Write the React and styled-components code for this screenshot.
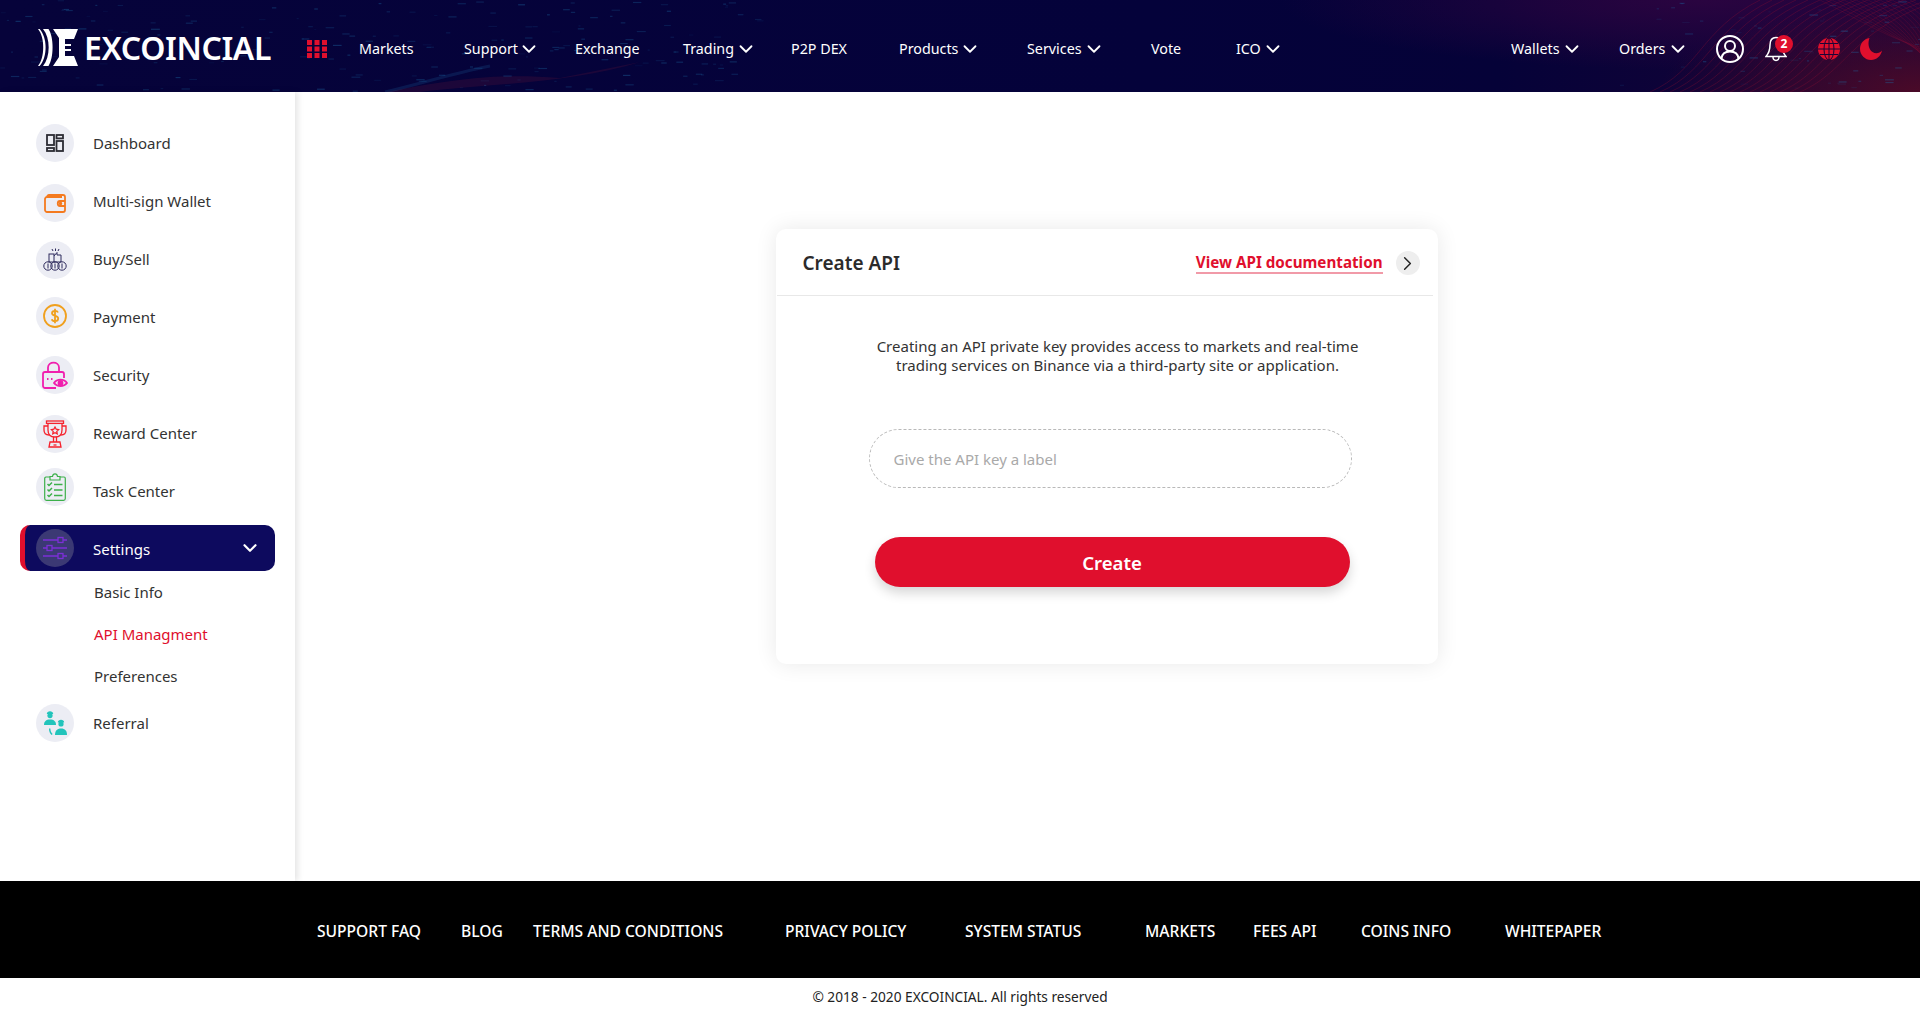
import React from 'react';
import styled, { createGlobalStyle } from 'styled-components';
import { ChevronDown, ChevronRight } from 'lucide-react';

var GlobalStyle = createGlobalStyle`
  html, body { margin: 0; padding: 0; background: #fff; }
  body { font-family: "Noto Sans", "Open Sans", sans-serif; color: #333; }
  * { box-sizing: border-box; }
`;

var navLeft = [
  { label: 'Markets', width: 105 },
  { label: 'Support', width: 111, caret: true, gap: 0 },
  { label: 'Exchange', width: 108 },
  { label: 'Trading', width: 108, caret: true, gap: 1 },
  { label: 'P2P DEX', width: 108 },
  { label: 'Products', width: 128, caret: true, gap: 1 },
  { label: 'Services', width: 124, caret: true, gap: 1 },
  { label: 'Vote', width: 85 },
  { label: 'ICO', width: 60, caret: true, gap: 1 },
];

var footerLinks = [
  { label: 'SUPPORT FAQ', width: 144 },
  { label: 'BLOG', width: 72 },
  { label: 'TERMS AND CONDITIONS', width: 252 },
  { label: 'PRIVACY POLICY', width: 180 },
  { label: 'SYSTEM STATUS', width: 180 },
  { label: 'MARKETS', width: 108 },
  { label: 'FEES API', width: 108 },
  { label: 'COINS INFO', width: 144 },
  { label: 'WHITEPAPER', width: 100 },
];

// header picture is a photo of dots, this gets near it
var dots = (() => {
  var out = [];
  var seed = 7;
  var rnd = () => {
    seed = (seed * 16807) % 2147483647;
    return seed / 2147483647;
  };
  for (var i = 0; i < 260; i++) {
    var x = rnd();
    var y = rnd();
    var right = i % 4 === 0;
    out.push({
      x: right ? 1620 + x * 300 : x * 760,
      y: y * 92,
      w: 2 + rnd() * 7,
      o: 0.08 + rnd() * 0.3,
    });
  }
  return out;
})();

var waves = Array.from({ length: 16 }, (_, i) => i);

var HeaderArt = () => (
  <ArtSvg viewBox="0 0 1920 92" preserveAspectRatio="none" aria-hidden="true">
    {dots.map((d, i) => (
      <rect key={i} x={d.x} y={d.y} width={d.w} height="1.2" fill="#1d6fa8" opacity={d.o} />
    ))}
    {waves.map((i) => (
      <path
        key={i}
        d={`M${1650 + i * 10} 92 C${1700 + i * 10} 70 ${1700 + i * 10} 30 ${1760 + i * 12} 0`}
        fill="none"
        stroke="#a01030"
        strokeWidth="0.8"
        opacity="0.35"
      />
    ))}
    {waves.map((i) => (
      <path
        key={'b' + i}
        d={`M${1820 + i * 6} 0 C${1860 + i * 6} 20 ${1890 + i * 4} 40 1930 ${50 + i * 3}`}
        fill="none"
        stroke="#a01030"
        strokeWidth="0.8"
        opacity="0.25"
      />
    ))}
    <path d="M385 92 C440 82 490 72 560 78 L640 62 C570 84 480 84 420 92 Z" fill="#7a1838" opacity="0.2" />
    <path d="M385 92 C420 84 450 74 490 66" stroke="#1d6fa8" strokeWidth="3" fill="none" opacity="0.2" />
  </ArtSvg>
);

var Logo = () => (
  <svg width="40" height="37" viewBox="0 0 40 37" aria-hidden="true">
    <path d="M0 0 C7 8 7 29 0 37 L1.6 37 C9.6 28 9.6 9 1.6 0 Z" fill="#fff" />
    <path d="M5 0 L10.5 0 C16 8 16 29 10.5 37 L5 37 C12.6 28 12.6 9 5 0 Z" fill="#fff" />
    <path
      d="M15 0 H40 L36 10 H27 V15 H33 V17 H27 V20 H33 V22 H27 V27 H36 L40 37 H15 L21 28 C21 24 21 13 21 9 Z"
      fill="#fff"
    />
  </svg>
);

var GridIcon = () => (
  <svg width="20" height="18" viewBox="0 0 20 18" aria-hidden="true">
    {[0, 7.5, 15].map((x) =>
      [0, 6.5, 13].map((y) => <rect key={`${x}-${y}`} x={x} y={y} width="5" height="5" fill="#e00f2d" />)
    )}
  </svg>
);

var UserIcon = () => (
  <svg width="28" height="28" viewBox="0 0 28 28" fill="none" stroke="#fff" strokeWidth="2" aria-hidden="true">
    <circle cx="14" cy="14" r="13" />
    <circle cx="14" cy="11" r="5" />
    <path d="M5.5 23.5 C6 18.5 10 16.5 14 16.5 C18 16.5 22 18.5 22.5 23.5" />
  </svg>
);

var BellIcon = () => (
  <svg width="22" height="26" viewBox="0 0 22 26" fill="none" stroke="#fff" strokeWidth="1.5" aria-hidden="true">
    <path d="M11 1.5 C6.5 1.5 5 5 5 9 C5 14 4 17 1 20.5 H21 C18 17 17 14 17 9 C17 5 15.5 1.5 11 1.5 Z" />
    <path d="M8 21 C8 25.5 14 25.5 14 21" />
  </svg>
);

var GlobeIcon = () => (
  <svg width="22" height="22" viewBox="0 0 22 22" aria-hidden="true">
    <circle cx="11" cy="11" r="11" fill="#e00f2d" />
    <g fill="none" stroke="#1a0536" strokeWidth="1">
      <ellipse cx="11" cy="11" rx="5" ry="11" />
      <path d="M11 0 V22 M0 11 H22 M2 5.5 H20 M2 16.5 H20" />
    </g>
  </svg>
);

var MoonIcon = () => (
  <svg width="22" height="22" viewBox="0 0 22 22" aria-hidden="true">
    <path d="M9.5 0 C4 1 0 5.5 0 11 C0 17 5 22 11 22 C16.5 22 21 18 22 12.5 C19.5 15.5 15.5 16 12.5 14 C8.5 11.5 7.5 5 9.5 0 Z" fill="#e00f2d" />
  </svg>
);

var DashboardIcon = () => (
  <svg width="18" height="18" viewBox="0 0 18 18" fill="none" stroke="#2b2b33" strokeWidth="1.8" aria-hidden="true">
    <rect x="1" y="1" width="7" height="10" />
    <rect x="1" y="14" width="7" height="3" />
    <rect x="10.5" y="1" width="6.5" height="3.4" />
    <rect x="10.5" y="7" width="6.5" height="10" />
  </svg>
);

var WalletIcon = () => (
  <svg width="22" height="19" viewBox="0 0 22 19" fill="none" stroke="#f47a1f" strokeWidth="1.8" aria-hidden="true">
    <path d="M3 3 C3 1.8 4 1 5 1 H19 C20 1 21 2 21 3 V16 C21 17 20 18 19 18 H3 C2 18 1 17 1 16 V5 C1 4 2 3 3 3 H18" />
    <path d="M21 7 H16 C13 7 13 12 16 12 H21" />
    <circle cx="16.5" cy="9.5" r="0.9" />
  </svg>
);

var BuySellIcon = () => (
  <svg width="24" height="24" viewBox="0 0 24 24" fill="none" stroke="#2d2a5c" strokeWidth="1" aria-hidden="true">
    <path d="M9 1 L10 3 M12.5 0.5 V3 M16 1 L15 3" />
    <rect x="6" y="6" width="5" height="8" />
    <path d="M11 8 L14 4.5 V7 H18 V14 H11" />
    <circle cx="5" cy="18" r="4.2" />
    <circle cx="12" cy="18" r="4.2" />
    <circle cx="19" cy="18" r="4.2" />
    <path d="M5 15.5 V20.5 M12 15.5 V20.5 M19 15.5 V20.5" />
  </svg>
);

var PaymentIcon = () => (
  <svg width="24" height="24" viewBox="0 0 24 24" fill="none" stroke="#f0a01e" strokeWidth="1.8" aria-hidden="true">
    <circle cx="12" cy="12" r="11" />
    <path d="M15 8.5 C14.5 7 13 6.8 12 6.8 C10.2 6.8 9 7.8 9 9.2 C9 12.4 15.2 11 15.2 14.6 C15.2 16.2 13.8 17.2 12 17.2 C10.6 17.2 9.2 16.6 8.8 15.2 M12 4.8 V19.2" />
  </svg>
);

var SecurityIcon = () => (
  <svg width="26" height="28" viewBox="0 0 26 28" fill="none" stroke="#f01fae" strokeWidth="1.8" aria-hidden="true">
    <path d="M6 11 V6.5 C6 0 17 0 17 6.5 V11" />
    <path d="M14 27 H3 C2 27 1 26 1 25 V13 C1 12 2 11 3 11 H20 C21 11 22 12 22 13 V17" />
    <path d="M5 18 H6.5 M9 18 H10.5" />
    <path d="M12 22 C15 17.5 22 17.5 25 22 C22 26 15 26 12 22 Z" />
    <circle cx="18.5" cy="22" r="2" fill="#f01fae" />
  </svg>
);

var RewardIcon = () => (
  <svg width="24" height="28" viewBox="0 0 24 28" fill="none" stroke="#f5222d" strokeWidth="1.3" aria-hidden="true">
    <rect x="3.5" y="1" width="17" height="2.4" />
    <path d="M5 3.5 V10 C5 15 8 17 12 17 C16 17 19 15 19 10 V3.5" />
    <path d="M5 6 H1 V10 C1 13 3 15 6 15 M19 6 H23 V10 C23 13 21 15 18 15" />
    <path d="M12 7 L13.2 9.2 L15.6 9.6 L13.8 11.4 L14.2 13.8 L12 12.7 L9.8 13.8 L10.2 11.4 L8.4 9.6 L10.8 9.2 Z" />
    <path d="M10.5 17 V22 H13.5 V17 M7 22 H17 L18 27 H6 Z" />
    <path d="M10.5 25 H13.5" />
  </svg>
);

var TaskIcon = () => (
  <svg width="22" height="28" viewBox="0 0 22 28" fill="none" stroke="#3cb04a" strokeWidth="1.2" aria-hidden="true">
    <path d="M6 4 H2 C1 4 0.7 5 0.7 5.5 V25.5 C0.7 26.5 1.5 27.3 2.5 27.3 H19.5 C20.5 27.3 21.3 26.5 21.3 25.5 V5.5 C21.3 4.5 20.5 4 20 4 H16" />
    <path d="M6 7 V3.5 H8.5 C9 0 13 0 13.5 3.5 H16 V7 Z" />
    <path d="M3.5 11 L5 12.5 L8 9.5 M3.5 16.5 L5 18 L8 15 M3.5 22 L5 23.5 L8 20.5" strokeWidth="1.5" />
    <path d="M10 11.5 H18.5 M10 17 H18.5 M10 22.5 H18.5" strokeWidth="1.5" />
  </svg>
);

var SlidersIcon = () => (
  <svg width="24" height="24" viewBox="0 0 24 24" fill="none" stroke="#7c2fd6" strokeWidth="1.3" aria-hidden="true">
    <path d="M0 4 H15 M20 4 H24 M0 12 H4 M9 12 H24 M0 20 H15 M20 20 H24" />
    <rect x="15" y="1.5" width="5" height="5" />
    <rect x="4" y="9.5" width="5" height="5" />
    <rect x="15" y="17.5" width="5" height="5" />
  </svg>
);

var ReferralIcon = () => (
  <svg width="25" height="25" viewBox="0 0 25 25" fill="#22c4bb" aria-hidden="true">
    <path d="M3.8 3 C3.8 -0.6 10.2 -0.6 10.2 3 Z" />
    <circle cx="7" cy="4.6" r="2.6" />
    <path d="M1 14 C1 10.5 3 8.6 7 8.6 C11 8.6 13 10.5 13 14 Z" />
    <path d="M14.8 11.4 C14.8 7.8 21.2 7.8 21.2 11.4 Z" />
    <circle cx="18" cy="13" r="2.6" />
    <path d="M12 24 C12 20 14 17.6 18 17.6 C22 17.6 24 20 24 24 Z" />
    <path d="M6 17.5 L7.4 17.5 C7.4 19.6 8 21.4 9.6 23 L8.7 24 C6.8 22.4 6 20.4 6 17.5 Z" />
  </svg>
);

var menu = [
  { label: 'Dashboard', icon: <DashboardIcon /> },
  { label: 'Multi-sign Wallet', icon: <WalletIcon />, shift: 2 },
  { label: 'Buy/Sell', icon: <BuySellIcon />, shift: 1 },
  { label: 'Payment', icon: <PaymentIcon />, shift: -1 },
  { label: 'Security', icon: <SecurityIcon /> },
  { label: 'Reward Center', icon: <RewardIcon />, shift: 1 },
  { label: 'Task Center', icon: <TaskIcon />, shift: -4 },
];

var App = () => {
  return (
    <Page>
      <GlobalStyle />
      <Header>
        <HeaderArt />
        <Brand>
          <Logo />
          <BrandName>EXCOINCIAL</BrandName>
        </Brand>
        <GridSlot>
          <GridIcon />
        </GridSlot>
        <NavGroup>
          {navLeft.map((item) => (
            <NavItem key={item.label} $width={item.width} $gap={item.gap}>
              {item.label}
              {item.caret && <ChevronDown size={22} strokeWidth={2} />}
            </NavItem>
          ))}
        </NavGroup>
        <NavRight>
          <NavItem $width={108} $gap={2}>
            Wallets
            <ChevronDown size={22} strokeWidth={2} />
          </NavItem>
          <NavItem $width={97} $gap={2}>
            Orders
            <ChevronDown size={22} strokeWidth={2} />
          </NavItem>
          <IconSlot $width={49}>
            <UserIcon />
          </IconSlot>
          <IconSlot $width={53}>
            <BellIcon />
            <Badge>2</Badge>
          </IconSlot>
          <IconSlot $width={42}>
            <GlobeIcon />
          </IconSlot>
          <IconSlot $width={22}>
            <MoonIcon />
          </IconSlot>
        </NavRight>
      </Header>

      <Body>
        <Sidebar>
          {menu.map((item) => (
            <MenuRow key={item.label}>
              <IconCircle $shift={item.shift}>{item.icon}</IconCircle>
              <MenuLabel>{item.label}</MenuLabel>
            </MenuRow>
          ))}
          <ActiveRow>
            <IconCircle $active>
              <SlidersIcon />
            </IconCircle>
            <MenuLabel $active>Settings</MenuLabel>
            <ChevronDown size={22} strokeWidth={2.4} color="#fff" />
          </ActiveRow>
          <SubMenu>
            <SubItem>Basic Info</SubItem>
            <SubItem $active>API Managment</SubItem>
            <SubItem>Preferences</SubItem>
          </SubMenu>
          <MenuRow>
            <IconCircle>
              <ReferralIcon />
            </IconCircle>
            <MenuLabel>Referral</MenuLabel>
          </MenuRow>
        </Sidebar>

        <Main>
          <Card>
            <CardHead>
              <CardTitle>Create API</CardTitle>
              <DocLink>View API documentation</DocLink>
              <RoundArrow>
                <ChevronRight size={23} strokeWidth={1.5} color="#222" />
              </RoundArrow>
            </CardHead>
            <CardBody>
              <Intro>
                Creating an API private key provides access to markets and real-time
                <br />
                trading services on Binance via a third-party site or application.
              </Intro>
              <LabelInput placeholder="Give the API key a label" />
              <CreateButton>Create</CreateButton>
            </CardBody>
          </Card>
        </Main>
      </Body>

      <Footer>
        {footerLinks.map((link) => (
          <FooterLink key={link.label} $width={link.width}>
            {link.label}
          </FooterLink>
        ))}
      </Footer>
      <Copyright>© 2018 - 2020 EXCOINCIAL. All rights reserved</Copyright>
    </Page>
  );
};

var Page = styled.div`
  display: flex;
  flex-direction: column;
  min-height: 1021px;
  background: #fff;
`;

var Header = styled.header`
  position: relative;
  display: flex;
  align-items: center;
  height: 92px;
  padding: 5px 38px 0 38px;
  color: #fff;
  overflow: hidden;
  background:
    radial-gradient(ellipse 260px 90px at 100% 100%, #4a0a28 0%, rgba(74, 10, 40, 0) 100%),
    radial-gradient(ellipse 420px 70px at 1700px 0, #2a0440 0%, rgba(42, 4, 64, 0) 100%),
    linear-gradient(90deg, #06033a 0%, #04023a 60%, #050238 78%, #1a0338 100%);
`;

var ArtSvg = styled.svg`
  position: absolute;
  inset: 0;
  width: 100%;
  height: 100%;
`;

var Brand = styled.div`
  position: relative;
  display: flex;
  align-items: center;
  gap: 6px;
  width: 269px;
  margin-top: -2px;
`;

var BrandName = styled.span`
  font-size: 32px;
  font-weight: 600;
  letter-spacing: -0.4px;
  line-height: 37px;
  color: #fff;
`;

var GridSlot = styled.div`
  position: relative;
  display: flex;
  width: 52px;
`;

var NavGroup = styled.nav`
  position: relative;
  display: flex;
  align-items: center;
`;

var NavRight = styled(NavGroup)`
  margin-left: auto;
`;

var NavItem = styled.a`
  display: flex;
  align-items: center;
  gap: ${(p) => p.$gap || 0}px;
  width: ${(p) => p.$width}px;
  font-size: 14.3px;
  line-height: 20px;
  color: #fff;
  white-space: nowrap;
`;

var IconSlot = styled.span`
  position: relative;
  display: flex;
  align-items: center;
  width: ${(p) => p.$width}px;
`;

var Badge = styled.span`
  position: absolute;
  left: 10px;
  top: -1px;
  width: 18px;
  height: 18px;
  border-radius: 50%;
  background: #e00f2d;
  color: #fff;
  font-size: 12px;
  font-weight: 700;
  line-height: 18px;
  text-align: center;
`;

var Body = styled.div`
  display: flex;
  height: 789px;
`;

var Sidebar = styled.aside`
  position: relative;
  width: 295px;
  flex-shrink: 0;
  padding: 22px 20px 0;
  background: #fff;
  box-shadow: 3px 0 6px rgba(0, 0, 0, 0.1);
`;

var MenuRow = styled.div`
  display: flex;
  align-items: center;
  height: 58px;
  padding-left: 16px;
`;

var ActiveRow = styled(MenuRow)`
  height: 46px;
  margin-top: 5px;
  padding-right: 14px;
  border-left: 5px solid #e00f2d;
  padding-left: 11px;
  border-radius: 10px;
  background: #0d0a5e;
`;

var IconCircle = styled.span`
  display: flex;
  align-items: center;
  justify-content: center;
  flex-shrink: 0;
  width: 38px;
  height: 38px;
  border-radius: 50%;
  background: ${(p) => (p.$active ? '#3b3974' : '#ecedf4')};
  transform: translateY(${(p) => p.$shift || 0}px);
`;

var MenuLabel = styled.span`
  flex: 1;
  margin-left: 19px;
  padding-top: ${(p) => (p.$active ? 2 : 0)}px;
  font-size: 15px;
  color: ${(p) => (p.$active ? '#fff' : '#333')};
`;

var SubMenu = styled.div`
  display: flex;
  flex-direction: column;
  margin-bottom: -3px;
  padding-left: 74px;
`;

var SubItem = styled.a`
  height: 42px;
  font-size: 15px;
  line-height: 42px;
  color: ${(p) => (p.$active ? '#e00f2d' : '#333')};
`;

var Main = styled.main`
  flex: 1;
  display: flex;
  justify-content: center;
  padding: 137px 2px 0 0;
`;

var Card = styled.section`
  width: 662px;
  height: 435px;
  border-radius: 10px;
  background: #fff;
  box-shadow: 0 0 22px rgba(0, 0, 0, 0.09);
`;

var CardHead = styled.div`
  display: flex;
  align-items: center;
  height: 67px;
  margin: 0 5px 0 1px;
  padding: 2px 13px 0 26px;
  border-bottom: 1px solid #e8e8e8;
`;

var CardTitle = styled.h2`
  flex: 1;
  margin: 0;
  font-size: 19px;
  font-weight: 600;
  color: #2b2b2b;
`;

var DocLink = styled.a`
  font-size: 15.2px;
  font-weight: 700;
  line-height: 20px;
  color: #e00f2d;
  border-bottom: 2px solid #f19aa8;
`;

var RoundArrow = styled.span`
  display: flex;
  align-items: center;
  justify-content: center;
  width: 24px;
  height: 24px;
  margin-left: 13px;
  border-radius: 50%;
  background: #eee;
`;

var CardBody = styled.div`
  display: flex;
  flex-direction: column;
  align-items: flex-start;
  padding: 41px 0 0 93px;
`;

var Intro = styled.p`
  width: 498px;
  margin: 0;
  font-size: 15px;
  line-height: 19px;
  text-align: center;
  color: #333;
`;

var LabelInput = styled.input`
  width: 483px;
  height: 59px;
  margin-top: 54px;
  padding: 0 24px;
  border: 1px dashed #b9b9b9;
  border-radius: 30px;
  outline: none;
  background: #fff;
  font-family: inherit;
  font-size: 15px;
  color: #333;

  &::placeholder {
    color: #a9a9a9;
    opacity: 1;
  }
`;

var CreateButton = styled.button`
  width: 475px;
  height: 50px;
  margin: 49px 0 0 6px;
  border: 0;
  border-radius: 25px;
  background: #e00f2d;
  box-shadow: 0 6px 12px rgba(0, 0, 0, 0.16);
  color: #fff;
  font-family: inherit;
  font-size: 18.6px;
  font-weight: 600;
`;

var Footer = styled.footer`
  display: flex;
  align-items: center;
  height: 97px;
  padding: 2px 0 0 317px;
  background: #000;
`;

var FooterLink = styled.a`
  width: ${(p) => p.$width}px;
  font-size: 15.6px;
  font-weight: 500;
  color: #fff;
  white-space: nowrap;
`;

var Copyright = styled.div`
  padding-top: 9px;
  font-size: 13.7px;
  line-height: 20px;
  text-align: center;
  color: #222;
`;

export default App;
